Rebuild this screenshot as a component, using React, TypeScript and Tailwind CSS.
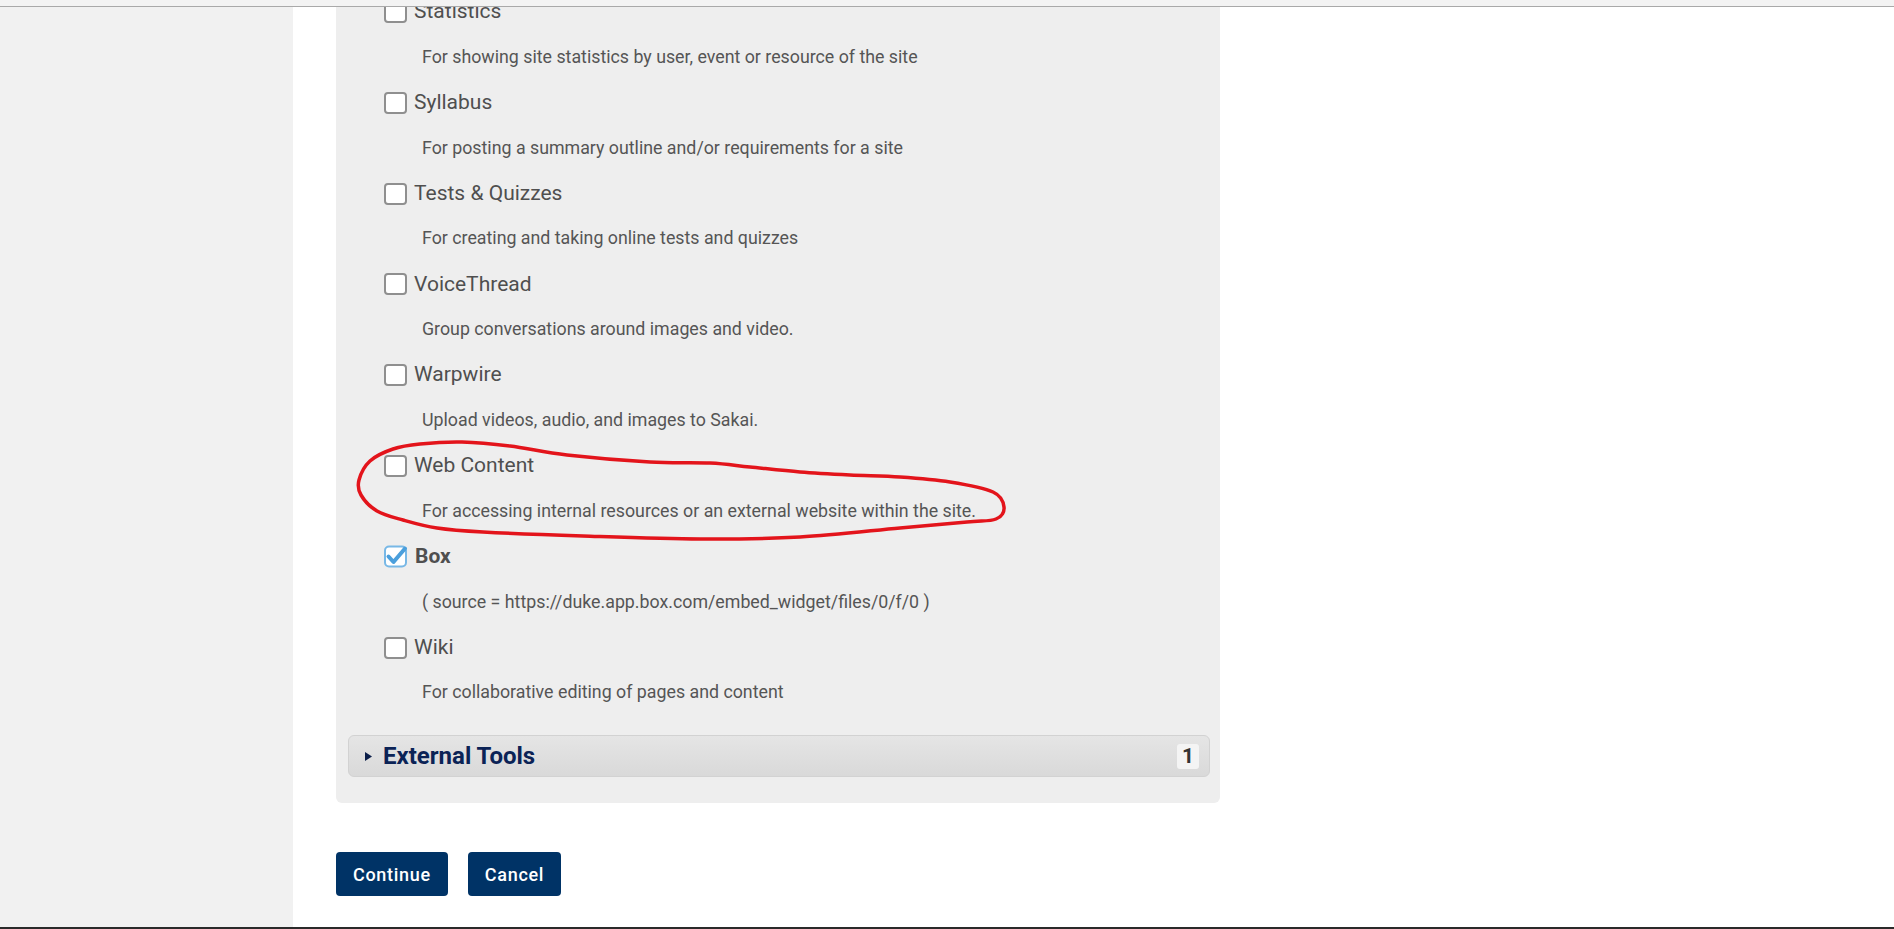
const tools = [
  { name: "Statistics", desc: "For showing site statistics by user, event or resource of the site" },
  { name: "Syllabus", desc: "For posting a summary outline and/or requirements for a site" },
  { name: "Tests & Quizzes", desc: "For creating and taking online tests and quizzes" },
  { name: "VoiceThread", desc: "Group conversations around images and video." },
  { name: "Warpwire", desc: "Upload videos, audio, and images to Sakai." },
  { name: "Web Content", desc: "For accessing internal resources or an external website within the site." },
  { name: "Box", desc: "( source = https://duke.app.box.com/embed_widget/files/0/f/0 )", checked: true },
  { name: "Wiki", desc: "For collaborative editing of pages and content" },
];

const Checkbox = ({ checked }: { checked?: boolean }) =>
  checked ? (
    <svg width="24" height="23" viewBox="0 0 24 23" className="shrink-0">
      <rect x="1" y="1.5" width="21" height="20" rx="4" fill="#ffffff" stroke="#78b8e6" strokeWidth="2" />
      <path d="M4.5 11.5 L9.5 17 L21 3.5" fill="none" stroke="#4b9fdc" strokeWidth="4" strokeLinecap="round" strokeLinejoin="round" />
    </svg>
  ) : (
    <span className="w-[23px] h-[22px] shrink-0 rounded-[4px] border-2 border-[#8f8f8f] bg-white" />
  );

// hand-drawn red ring around "Web Content"
const ring: number[][] = [
  [510, 446], [567, 455], [650, 462], [710, 463], [750, 467], [800, 472], [850, 475],
  [900, 477], [950, 482], [993, 492], [1004, 507], [996, 519], [967, 522], [900, 528],
  [800, 537], [700, 539], [583, 536], [483, 532], [437, 528], [403, 520], [377, 511], [361, 495],
  [359, 480], [370, 461], [393, 449], [420, 444], [462, 442],
];

const smooth = (pts: number[][]) => {
  const n = pts.length;
  const p = (i: number) => pts[(i + n) % n];
  let d = `M ${p(0)[0]} ${p(0)[1]}`;
  for (let i = 0; i < n; i++) {
    const [x0, y0] = p(i - 1);
    const [x1, y1] = p(i);
    const [x2, y2] = p(i + 1);
    const [x3, y3] = p(i + 2);
    d += ` C ${x1 + (x2 - x0) / 6} ${y1 + (y2 - y0) / 6}, ${x2 - (x3 - x1) / 6} ${y2 - (y3 - y1) / 6}, ${x2} ${y2}`;
  }
  return d;
};

export default function App() {
  return (
    <div
      className="relative h-screen w-full flex flex-col overflow-hidden bg-white"
      style={{ fontFamily: "Roboto, 'Liberation Sans', sans-serif" }}
    >
      <div className="h-[7px] shrink-0 bg-[#f3f3f3] border-b border-[#a9a9a9] z-10" />
      <div className="flex flex-1 min-h-0">
        <div className="w-[293px] shrink-0 bg-[#f1f1f1]" />
        <div className="flex-1 pl-[43px]">
          <div className="w-[884px] bg-[#eeeeee] rounded-b-[6px] pl-[48px] pr-[10px] pb-[26px] -mt-[7px]">
            {tools.map((t) => (
              <div key={t.name} className="pb-[22px]">
                <div className="h-6 flex items-center gap-[7px]">
                  <Checkbox checked={t.checked} />
                  <span className={`text-[21px] text-[#4f4f4f] ${t.checked ? "font-bold" : ""}`}>{t.name}</span>
                </div>
                <p className="mt-[20.8px] ml-[38px] h-6 leading-6 text-[17.8px] text-[#555555]">{t.desc}</p>
              </div>
            ))}
            <div className="-ml-[36px] mt-[9px] h-[42px] rounded-[6px] border border-[#d2d2d2] bg-gradient-to-b from-[#e5e5e5] to-[#d9d9d9] flex items-center pl-[16px] pr-[10px]">
              <svg width="7" height="9" viewBox="0 0 7 9" className="shrink-0">
                <polygon points="0,0 7,4.5 0,9" fill="#0c1f4a" />
              </svg>
              <span className="ml-[11px] text-[24px] font-bold text-[#0b2356]">External Tools</span>
              <span className="ml-auto px-[5px] h-[25px] leading-[25px] rounded-[3px] bg-[#f4f4f4] text-[21px] font-bold text-[#333333]">1</span>
            </div>
          </div>
          <div className="mt-[49px] flex gap-[20px]">
            <button className="h-[44px] px-[17px] rounded-[4px] bg-[#003366] text-white text-[18px] font-medium tracking-[0.7px]">Continue</button>
            <button className="h-[44px] px-[17px] rounded-[4px] bg-[#003366] text-white text-[18px] font-medium tracking-[0.7px]">Cancel</button>
          </div>
        </div>
      </div>
      <div className="h-[2px] shrink-0 bg-[#2a2a2a]" />
      <svg className="absolute inset-0 pointer-events-none" width="1894" height="929">
        <path d={smooth(ring)} fill="none" stroke="#e3141b" strokeWidth="3.5" strokeLinejoin="round" strokeLinecap="round" />
      </svg>
    </div>
  );
}
